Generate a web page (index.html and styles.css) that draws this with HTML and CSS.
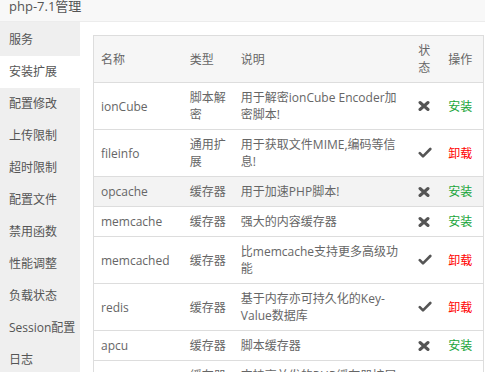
FILE: index.html
```html
<!DOCTYPE html>
<html lang="zh-CN">
<head>
    <meta charset="UTF-8">
    <title>php-7.1管理</title>
    <link rel="stylesheet" href="styles.css">
</head>
<body>
    <div class="title-bar">php-7.1管理</div>
    <div class="layout">
        <div class="side-menu">
            <div class="menu-item">服务</div>
            <div class="menu-item active">安装扩展</div>
            <div class="menu-item">配置修改</div>
            <div class="menu-item">上传限制</div>
            <div class="menu-item">超时限制</div>
            <div class="menu-item">配置文件</div>
            <div class="menu-item">禁用函数</div>
            <div class="menu-item">性能调整</div>
            <div class="menu-item">负载状态</div>
            <div class="menu-item">Session配置</div>
            <div class="menu-item">日志</div>
        </div>
        <div class="content">
            <table class="ext-table">
                <colgroup>
                    <col class="col-name">
                    <col class="col-type">
                    <col class="col-desc">
                    <col class="col-status">
                    <col class="col-op">
                </colgroup>
                <thead>
                    <tr>
                        <th>名称</th>
                        <th>类型</th>
                        <th>说明</th>
                        <th>状态</th>
                        <th>操作</th>
                    </tr>
                </thead>
                <tbody id="ext-list"></tbody>
            </table>
        </div>
    </div>
    <script>
        // \n 处按原界面的换行位置断行
        const exts = [
            { name: "ionCube", type: "脚本解密", desc: "用于解密ionCube Encoder加\n密脚本!", on: false },
            { name: "fileinfo", type: "通用扩展", desc: "用于获取文件MIME,编码等信\n息!", on: true },
            { name: "opcache", type: "缓存器", desc: "用于加速PHP脚本!", on: false, hover: true },
            { name: "memcache", type: "缓存器", desc: "强大的内容缓存器", on: false },
            { name: "memcached", type: "缓存器", desc: "比memcache支持更多高级功\n能", on: true },
            { name: "redis", type: "缓存器", desc: "基于内存亦可持久化的Key-\nValue数据库", on: true },
            { name: "apcu", type: "缓存器", desc: "脚本缓存器", on: false },
            { name: "xcache", type: "缓存器扩展", desc: "支持高并发的PHP缓存器扩展组件", on: false }
        ];

        const iconX = '<svg class="ico" width="12" height="12" viewBox="0 0 12 12"><path d="M2 2.5 L10 9.5 M10 2.5 L2 9.5" stroke="#555" stroke-width="3" stroke-linecap="round"/></svg>';
        const iconOk = '<svg class="ico" width="14" height="12" viewBox="0 0 14 12"><path d="M1.8 6.2 L5 9.4 L12.3 2" stroke="#555" stroke-width="2.6" stroke-linecap="round" stroke-linejoin="round" fill="none"/></svg>';

        const list = document.getElementById("ext-list");
        exts.forEach((ext) => {
            const tr = document.createElement("tr");
            if (ext.hover) tr.className = "hover";
            tr.innerHTML = `<td>${ext.name}</td><td>${ext.type}</td><td class="desc">${ext.desc}</td><td>${ext.on ? iconOk : iconX}</td><td>${ext.on ? '<a class="link-red">卸载</a>' : '<a class="link-green">安装</a>'}</td>`;
            list.appendChild(tr);
        });
    </script>
</body>
</html>
```

FILE: styles.css
```css
html, body {
    margin: 0;
    padding: 0;
    height: 100%;
    overflow: hidden;
}

body {
    font-family: "Open Sans", "Noto Sans CJK SC", sans-serif;
    font-size: 12px;
    color: #666;
    background-color: #fff;
}

.title-bar {
    height: 22px;
    line-height: 12px;
    padding-left: 9px;
    font-size: 13px;
    color: #555;
    background-color: #f8f8f8;
    border-bottom: 1px solid #ececec;
    box-sizing: border-box;
}

.layout {
    display: flex;
    height: calc(100% - 22px);
}

.side-menu {
    width: 80px;
    flex-shrink: 0;
    background-color: #efefef;
    padding-top: 2px;
}

.menu-item {
    height: 32px;
    line-height: 32px;
    padding-left: 9px;
    color: #555;
    white-space: nowrap;
}

.menu-item.active {
    background-color: #fff;
}

.content {
    flex: 1;
    padding: 13px 1px 0 13px;
    overflow: hidden;
}

.ext-table {
    width: 391px;
    table-layout: fixed;
    border-collapse: collapse;
    border: 1px solid #ddd;
}

.col-name { width: 89px; }
.col-type { width: 51px; }
.col-desc { width: 177px; }
.col-status { width: 30px; }
.col-op { width: 42px; }

.ext-table th,
.ext-table td {
    padding: 6px 7px;
    line-height: 17px;
    text-align: left;
    font-weight: normal;
    vertical-align: middle;
    border-bottom: 1px solid #ddd;
    word-break: break-word;
}

.ext-table td.desc {
    white-space: pre-line;
}

.ext-table thead tr {
    background-color: #f6f6f6;
}

.ext-table tr.hover {
    background-color: #f3f3f3;
}

.ico {
    display: block;
}

.link-green {
    color: #20a53a;
}

.link-red {
    color: #f00;
}
```
